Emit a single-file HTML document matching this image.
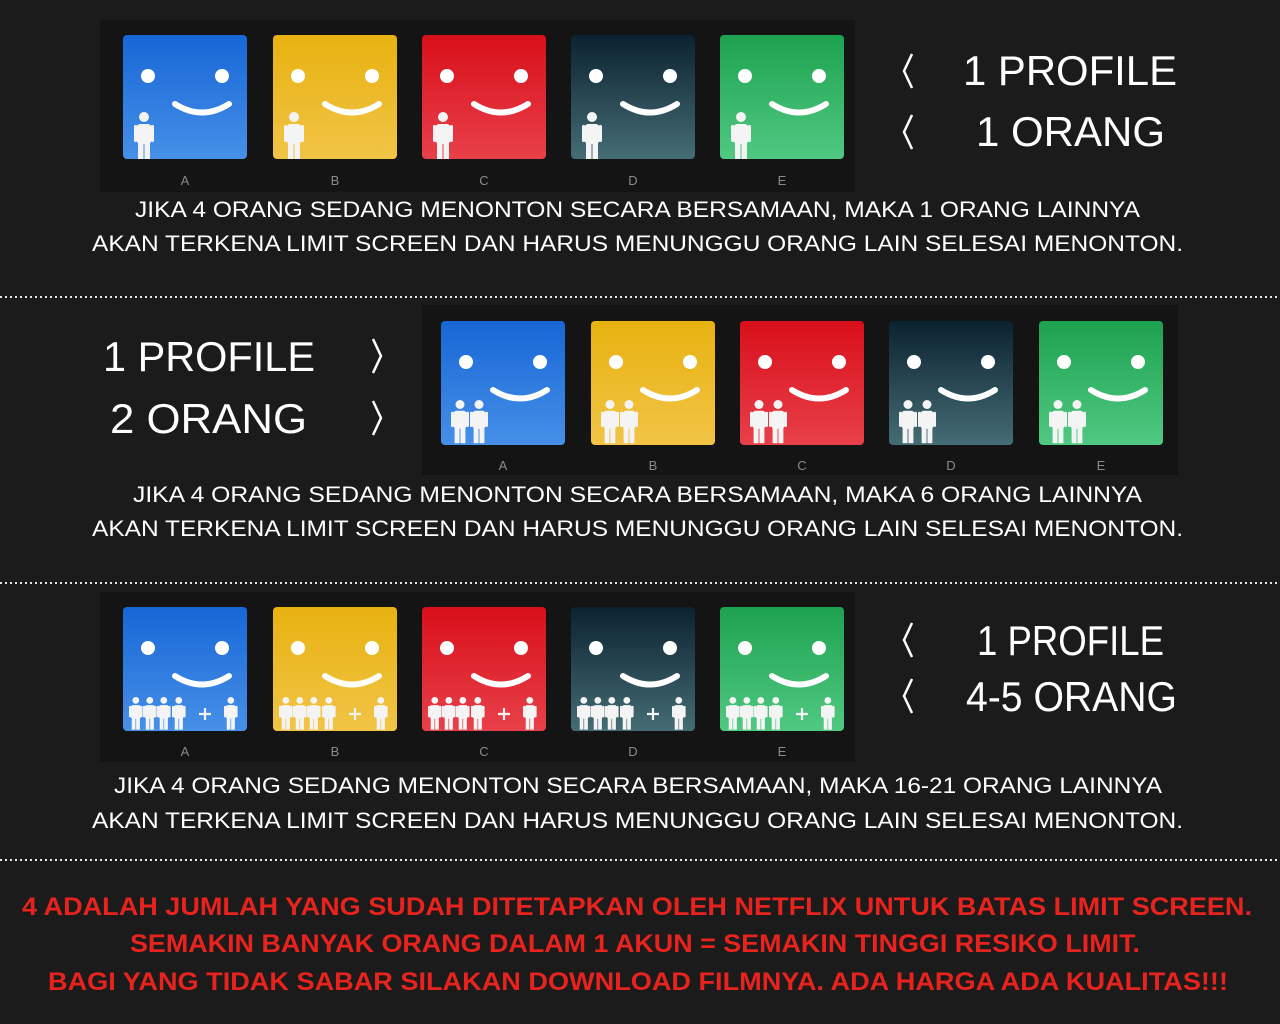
<!DOCTYPE html>
<html><head><meta charset="utf-8"><style>html,body{margin:0;padding:0;background:#1b1b1b;width:1280px;height:1024px;overflow:hidden}</style></head><body>
<svg width="1280" height="1024" viewBox="0 0 1280 1024" xmlns="http://www.w3.org/2000/svg" font-family="Liberation Sans, sans-serif">
<defs>
<linearGradient id="gA" x1="0" y1="0" x2="0" y2="1"><stop offset="0" stop-color="#1766d6"/><stop offset="1" stop-color="#4690e8"/></linearGradient>
<linearGradient id="gB" x1="0" y1="0" x2="0" y2="1"><stop offset="0" stop-color="#e8b210"/><stop offset="1" stop-color="#f1c446"/></linearGradient>
<linearGradient id="gC" x1="0" y1="0" x2="0" y2="1"><stop offset="0" stop-color="#d80f1a"/><stop offset="1" stop-color="#e8404a"/></linearGradient>
<linearGradient id="gD" x1="0" y1="0" x2="0" y2="1"><stop offset="0" stop-color="#0b2230"/><stop offset="1" stop-color="#456c74"/></linearGradient>
<linearGradient id="gE" x1="0" y1="0" x2="0" y2="1"><stop offset="0" stop-color="#1da250"/><stop offset="1" stop-color="#50c982"/></linearGradient>
<g id="face" fill="#fff"><circle cx="25" cy="41" r="7"/><circle cx="99" cy="41" r="7"/><path d="M52 69 Q79 86 106 69" fill="none" stroke="#fff" stroke-width="6" stroke-linecap="round"/></g>
<g id="p" fill="#f4f4f4"><circle cx="10" cy="5" r="5"/><rect x="3" y="12" width="14" height="20" rx="3"/><rect x="0" y="13" width="3.3" height="17" rx="1.5"/><rect x="16.7" y="13" width="3.3" height="17" rx="1.5"/><rect x="4" y="28" width="5.5" height="20"/><rect x="10.5" y="28" width="5.5" height="20"/></g>
<g id="p1"><use href="#p" transform="translate(11,77)"/></g>
<g id="p2"><use href="#p" transform="translate(10,79) scale(0.9)"/><use href="#p" transform="translate(29,79) scale(0.9)"/></g>
<g id="p3"><use href="#p" transform="translate(6,90) scale(0.68)"/><use href="#p" transform="translate(20,90) scale(0.68)"/><use href="#p" transform="translate(34,90) scale(0.68)"/><use href="#p" transform="translate(49,90) scale(0.68)"/><path d="M82 101v12M76 107h12" stroke="#f4f4f4" stroke-width="2.2"/><use href="#p" transform="translate(101,90) scale(0.68)"/></g>
<clipPath id="tc"><rect width="124" height="124" rx="4"/></clipPath>
</defs>
<rect width="1280" height="1024" fill="#1b1b1b"/>
<rect x="100" y="20" width="755" height="172" fill="#141414"/>
<rect x="422" y="305" width="756" height="170" fill="#141414"/>
<rect x="100" y="592" width="755" height="170" fill="#141414"/>

<g transform="translate(123,35)" clip-path="url(#tc)"><rect width="124" height="124" fill="url(#gA)"/><use href="#face"/><use href="#p1"/></g>
<g transform="translate(273,35)" clip-path="url(#tc)"><rect width="124" height="124" fill="url(#gB)"/><use href="#face"/><use href="#p1"/></g>
<g transform="translate(422,35)" clip-path="url(#tc)"><rect width="124" height="124" fill="url(#gC)"/><use href="#face"/><use href="#p1"/></g>
<g transform="translate(571,35)" clip-path="url(#tc)"><rect width="124" height="124" fill="url(#gD)"/><use href="#face"/><use href="#p1"/></g>
<g transform="translate(720,35)" clip-path="url(#tc)"><rect width="124" height="124" fill="url(#gE)"/><use href="#face"/><use href="#p1"/></g>
<g fill="#8a8a8a" font-size="13" text-anchor="middle"><text x="185" y="185">A</text><text x="335" y="185">B</text><text x="484" y="185">C</text><text x="633" y="185">D</text><text x="782" y="185">E</text></g>

<g transform="translate(441,321)" clip-path="url(#tc)"><rect width="124" height="124" fill="url(#gA)"/><use href="#face"/><use href="#p2"/></g>
<g transform="translate(591,321)" clip-path="url(#tc)"><rect width="124" height="124" fill="url(#gB)"/><use href="#face"/><use href="#p2"/></g>
<g transform="translate(740,321)" clip-path="url(#tc)"><rect width="124" height="124" fill="url(#gC)"/><use href="#face"/><use href="#p2"/></g>
<g transform="translate(889,321)" clip-path="url(#tc)"><rect width="124" height="124" fill="url(#gD)"/><use href="#face"/><use href="#p2"/></g>
<g transform="translate(1039,321)" clip-path="url(#tc)"><rect width="124" height="124" fill="url(#gE)"/><use href="#face"/><use href="#p2"/></g>
<g fill="#8a8a8a" font-size="13" text-anchor="middle"><text x="503" y="470">A</text><text x="653" y="470">B</text><text x="802" y="470">C</text><text x="951" y="470">D</text><text x="1101" y="470">E</text></g>

<g transform="translate(123,607)" clip-path="url(#tc)"><rect width="124" height="124" fill="url(#gA)"/><use href="#face"/><use href="#p3"/></g>
<g transform="translate(273,607)" clip-path="url(#tc)"><rect width="124" height="124" fill="url(#gB)"/><use href="#face"/><use href="#p3"/></g>
<g transform="translate(422,607)" clip-path="url(#tc)"><rect width="124" height="124" fill="url(#gC)"/><use href="#face"/><use href="#p3"/></g>
<g transform="translate(571,607)" clip-path="url(#tc)"><rect width="124" height="124" fill="url(#gD)"/><use href="#face"/><use href="#p3"/></g>
<g transform="translate(720,607)" clip-path="url(#tc)"><rect width="124" height="124" fill="url(#gE)"/><use href="#face"/><use href="#p3"/></g>
<g fill="#8a8a8a" font-size="13" text-anchor="middle"><text x="185" y="756">A</text><text x="335" y="756">B</text><text x="484" y="756">C</text><text x="633" y="756">D</text><text x="782" y="756">E</text></g>

<g fill="#fff" font-size="42">
<text x="963" y="85" textLength="214" lengthAdjust="spacingAndGlyphs">1 PROFILE</text>
<text x="976" y="146" textLength="189" lengthAdjust="spacingAndGlyphs">1 ORANG</text>
<text x="103" y="371" textLength="212" lengthAdjust="spacingAndGlyphs">1 PROFILE</text>
<text x="110" y="433" textLength="197" lengthAdjust="spacingAndGlyphs">2 ORANG</text>
<text x="977" y="655" textLength="187" lengthAdjust="spacingAndGlyphs">1 PROFILE</text>
<text x="966" y="711" textLength="211" lengthAdjust="spacingAndGlyphs">4-5 ORANG</text>
</g>
<g fill="none" stroke="#fff" stroke-width="2.5">
<path d="M912 54 L904 71 L912 88"/><path d="M912 115 L904 132 L912 149"/>
<path d="M373 339 L381 356 L373 373"/><path d="M373 401 L381 418 L373 435"/>
<path d="M912 623 L904 640 L912 657"/><path d="M912 679 L904 696 L912 713"/>
</g>

<g fill="#fff" font-size="22">
<text x="135" y="217" textLength="1005" lengthAdjust="spacingAndGlyphs">JIKA 4 ORANG SEDANG MENONTON SECARA BERSAMAAN, MAKA 1 ORANG LAINNYA</text>
<text x="92" y="251" textLength="1091" lengthAdjust="spacingAndGlyphs">AKAN TERKENA LIMIT SCREEN DAN HARUS MENUNGGU ORANG LAIN SELESAI MENONTON.</text>
<text x="133" y="502" textLength="1009" lengthAdjust="spacingAndGlyphs">JIKA 4 ORANG SEDANG MENONTON SECARA BERSAMAAN, MAKA 6 ORANG LAINNYA</text>
<text x="92" y="536" textLength="1091" lengthAdjust="spacingAndGlyphs">AKAN TERKENA LIMIT SCREEN DAN HARUS MENUNGGU ORANG LAIN SELESAI MENONTON.</text>
<text x="114" y="793" textLength="1048" lengthAdjust="spacingAndGlyphs">JIKA 4 ORANG SEDANG MENONTON SECARA BERSAMAAN, MAKA 16-21 ORANG LAINNYA</text>
<text x="92" y="828" textLength="1091" lengthAdjust="spacingAndGlyphs">AKAN TERKENA LIMIT SCREEN DAN HARUS MENUNGGU ORANG LAIN SELESAI MENONTON.</text>
</g>

<g stroke="#e8e8e8" stroke-width="2" stroke-dasharray="2 3">
<line x1="0" y1="297" x2="1280" y2="297"/><line x1="0" y1="583" x2="1280" y2="583"/><line x1="0" y1="860" x2="1280" y2="860"/>
</g>

<g fill="#e8231d" font-size="25" font-weight="bold">
<text x="22" y="915" textLength="1230" lengthAdjust="spacingAndGlyphs">4 ADALAH JUMLAH YANG SUDAH DITETAPKAN OLEH NETFLIX UNTUK BATAS LIMIT SCREEN.</text>
<text x="130" y="952" textLength="1010" lengthAdjust="spacingAndGlyphs">SEMAKIN BANYAK ORANG DALAM 1 AKUN = SEMAKIN TINGGI RESIKO LIMIT.</text>
<text x="48" y="990" textLength="1180" lengthAdjust="spacingAndGlyphs">BAGI YANG TIDAK SABAR SILAKAN DOWNLOAD FILMNYA. ADA HARGA ADA KUALITAS!!!</text>
</g>
</svg>
</body></html>
